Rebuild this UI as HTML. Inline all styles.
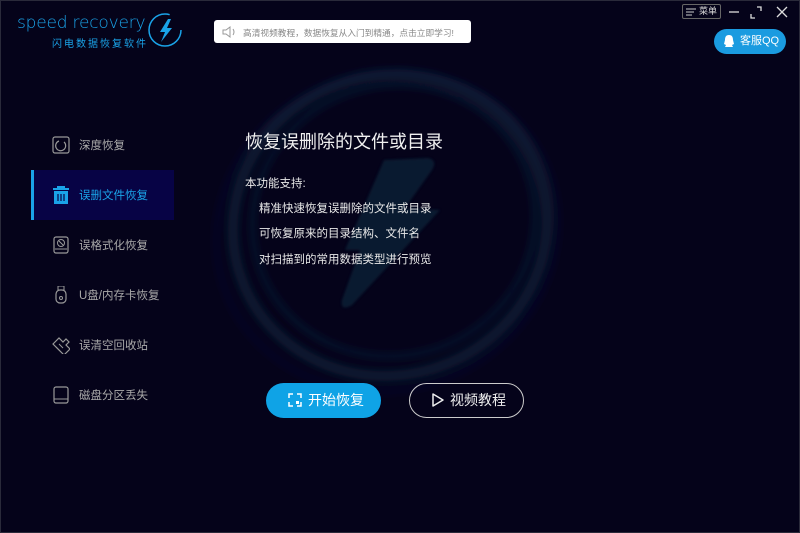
<!DOCTYPE html>
<html><head><meta charset="utf-8"><style>
*{margin:0;padding:0;box-sizing:border-box}
body{width:800px;height:533px;background:#05031a;overflow:hidden;position:relative;font-family:"Liberation Sans","Noto Sans CJK SC",sans-serif;color:#ddd}
.a{position:absolute}
.frame{position:absolute;inset:0;border:1px solid #2a2a3a;pointer-events:none}
.nav{position:absolute;left:31px;width:143px;height:50px;display:flex;align-items:center;font-size:11.5px;color:#aaa}
.nav span{margin-left:48px}
.nav svg{position:absolute;left:21px;top:16px}
.sub{font-size:11.5px;color:#e8e8e8;position:absolute}
</style></head><body>
<svg class="a" style="left:0;top:0" width="800" height="533">
<defs><filter id="b"><feGaussianBlur stdDeviation="4"/></filter><filter id="b2"><feGaussianBlur stdDeviation="1.2"/></filter></defs>
<g transform="rotate(-20 390 225)" filter="url(#b)">
<ellipse cx="390" cy="225" rx="158" ry="150" fill="none" stroke="#0c2c44" stroke-width="10" opacity=".6"/>
<ellipse cx="395" cy="222" rx="142" ry="135" fill="none" stroke="#0f344e" stroke-width="4" opacity=".5"/>
<ellipse cx="385" cy="230" rx="172" ry="158" fill="none" stroke="#171547" stroke-width="3" opacity=".5"/>
</g>
<path d="M384 160 L428 158 Q438 160 432 170 L405 208 L440 210 L352 305 Q340 312 342 300 L360 250 L345 250 Z" fill="#0b2a40" opacity=".6" filter="url(#b2)"/>
</svg>
<div class="frame"></div>
<div class="a" style="left:17px;top:13px;font-size:17px;color:#1aa3e8;letter-spacing:-0.2px;font-family:'DejaVu Sans','Liberation Sans',sans-serif;font-weight:300">speed recovery</div>
<div class="a" style="left:52px;top:35px;font-size:10px;color:#1aa3e8;letter-spacing:2px">闪电数据恢复软件</div>
<svg class="a" style="left:146px;top:11px" width="40" height="38"><circle cx="19" cy="19" r="16" fill="none" stroke="#1aa3e8" stroke-width="1.5" stroke-dasharray="80 22"/><path d="M22 8 L14 21 L19 21 L15 31 L26 17 L21 17 L25 8Z" fill="#1aa3e8"/></svg>
<div class="a" style="left:214px;top:20px;width:257px;height:23px;background:#fff;border-radius:3px"></div>
<svg class="a" style="left:221px;top:25px" width="16" height="14"><path d="M2 5h3l4-3v10l-4-3H2z" fill="none" stroke="#999" stroke-width="1"/><path d="M12 4q2 3 0 6" fill="none" stroke="#999"/></svg>
<div class="a" style="left:243px;top:26px;font-size:8.7px;color:#888">高清视频教程，数据恢复从入门到精通，点击立即学习!</div>
<div class="a" style="left:682px;top:4px;width:39px;height:15px;border:1px solid #666;border-radius:2px;font-size:9px;color:#ddd;line-height:13px;padding-left:16px">菜单</div>
<svg class="a" style="left:686px;top:8px" width="12" height="9"><path d="M0 1h10M0 4h8M0 7h6" stroke="#ccc"/></svg>
<svg class="a" style="left:728px;top:4px" width="70" height="16"><path d="M1 8h10" stroke="#ddd" stroke-width="1.3"/><path d="M23 10v4h4M29 3h4v4" stroke="#ddd" stroke-width="1.3" fill="none"/><path d="M49 3l10 10M59 3L49 13" stroke="#ddd" stroke-width="1.3"/></svg>
<div class="a" style="left:714px;top:29px;width:72px;height:25px;border-radius:13px;background:#1a9be0;font-size:11px;color:#fff;line-height:25px;padding-left:26px">客服QQ</div>
<svg class="a" style="left:722px;top:34px" width="14" height="15"><path d="M7 1c-3 0-4 2-4 5l-1 4 2 1-1 2h8l-1-2 2-1-1-4c0-3-1-5-4-5z" fill="#fff"/></svg>
<div class="nav" style="top:120px"><svg width="18" height="18"><rect x="1" y="1" width="16" height="16" rx="2" fill="none" stroke="#999" stroke-width="1.2"/><path d="M12 6a5 5 0 1 1-5-1" fill="none" stroke="#999" stroke-width="1.2"/></svg><span>深度恢复</span></div>
<div class="nav" style="top:170px;background:#070345;color:#1aa3e8"><div class="a" style="left:0;top:0;width:3px;height:50px;background:#1aa3e8"></div><svg width="18" height="18"><rect x="5" y="0" width="8" height="2" fill="#1aa3e8"/><rect x="1" y="2" width="16" height="2" fill="#1aa3e8"/><rect x="2" y="5" width="14" height="13" fill="#1aa3e8"/><path d="M6 8v7M9 8v7M12 8v7" stroke="#070345" stroke-width="1.2"/></svg><span>误删文件恢复</span></div>
<div class="nav" style="top:220px"><svg width="18" height="18"><rect x="2" y="1" width="14" height="16" rx="2" fill="none" stroke="#999" stroke-width="1.2"/><circle cx="9" cy="7" r="3.5" fill="none" stroke="#999"/><path d="M7 5l4 4M3 13h12" stroke="#999"/></svg><span>误格式化恢复</span></div>
<div class="nav" style="top:270px"><svg width="18" height="18"><rect x="6" y="0" width="6" height="4" fill="none" stroke="#999"/><rect x="4" y="4" width="10" height="13" rx="4" fill="none" stroke="#999" stroke-width="1.2"/><circle cx="9" cy="12" r="1.5" fill="none" stroke="#999"/></svg><span>U盘/内存卡恢复</span></div>
<div class="nav" style="top:320px"><svg width="18" height="18"><path d="M1 8l6-6 4 4 3-3 3 3-3 3 4 4-6 6z" fill="none" stroke="#999" stroke-width="1.2"/><path d="M4 11l4 4M7 8l4 4" stroke="#999"/></svg><span>误清空回收站</span></div>
<div class="nav" style="top:370px"><svg width="18" height="18"><rect x="2" y="1" width="14" height="16" rx="2" fill="none" stroke="#999" stroke-width="1.2"/><path d="M2 13h14" stroke="#999"/></svg><span>磁盘分区丢失</span></div>
<div class="a" style="left:245px;top:128px;font-size:18px;color:#f0f0f0">恢复误删除的文件或目录</div>
<div class="sub" style="left:245px;top:175px">本功能支持:</div>
<div class="sub" style="left:259px;top:200px">精准快速恢复误删除的文件或目录</div>
<div class="sub" style="left:259px;top:225px">可恢复原来的目录结构、文件名</div>
<div class="sub" style="left:259px;top:251px">对扫描到的常用数据类型进行预览</div>
<div class="a" style="left:266px;top:383px;width:115px;height:35px;border-radius:18px;background:#0fa3e6;color:#fff;font-size:14px;line-height:35px;padding-left:42px">开始恢复</div>
<svg class="a" style="left:288px;top:393px" width="14" height="14"><path d="M1 5V1h4M9 1h4v4M13 9v4H9M5 13H1V9" fill="none" stroke="#fff" stroke-width="1.5"/><rect x="8" y="8" width="3" height="3" fill="#fff"/></svg>
<div class="a" style="left:409px;top:383px;width:115px;height:35px;border-radius:18px;border:1px solid #ccc;color:#eee;font-size:14px;line-height:33px;padding-left:40px">视频教程</div>
<svg class="a" style="left:431px;top:392px" width="14" height="16"><path d="M2 2l10 6-10 6z" fill="none" stroke="#eee" stroke-width="1.5" stroke-linejoin="round"/></svg>
</body></html>
